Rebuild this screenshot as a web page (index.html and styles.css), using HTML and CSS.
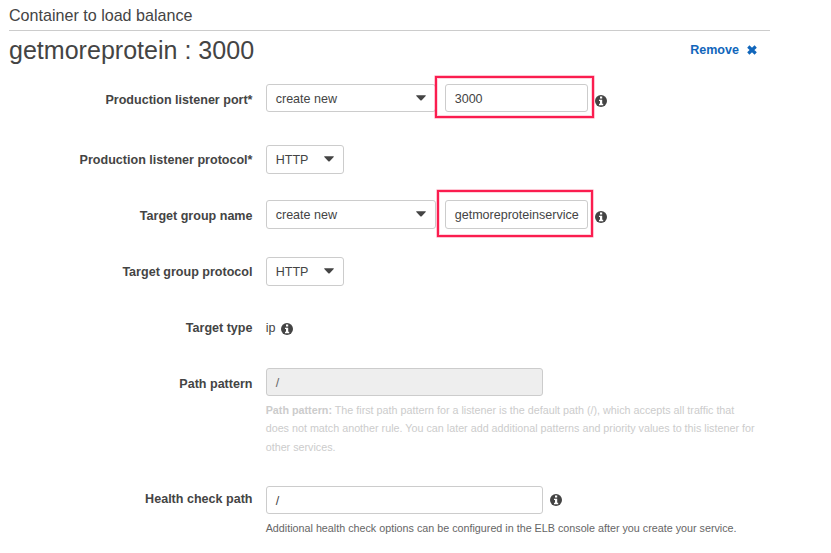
FILE: index.html
```html
<!DOCTYPE html>
<html lang="en">
<head>
<meta charset="utf-8">
<title>Container to load balance</title>
<link rel="stylesheet" href="styles.css">
</head>
<body>
<svg width="0" height="0" class="defs">
  <symbol id="info" viewBox="0 0 12 12"><circle cx="6" cy="6" r="6" fill="#444"/><path fill="#fff" d="M5 1.600h2.200v1.900H5zM4 4.700h3.200v4h1V10.200H4V8.700h1V6H4z"/></symbol>
  <symbol id="caret" viewBox="0 0 10 6"><path fill="#444" d="M.6 .2h8.800q.7.1.3.8L5.700 5.200q-.7.6-1.400 0L.3 1Q-.1.3.6.2z"/></symbol>
</svg>
<main class="panel">
  <h2 class="section-title">Container to load balance</h2>
  <header class="container-head">
    <h1>getmoreprotein : 3000</h1>
    <a class="remove">Remove <svg width="10" height="10" viewBox="0 0 10 10"><path d="M1.300 1.500l7.400 7M8.700 1.500l-7.400 7" stroke="#1166bb" stroke-width="3.200"/></svg></a>
  </header>
  <div class="row port">
    <label>Production listener port*</label>
    <div class="fields">
      <div class="box select wide">create new<svg class="caret"><use href="#caret"/></svg></div>
      <div class="marked"><div class="box input">3000</div><span class="mark"></span></div>
      <svg class="info"><use href="#info"/></svg>
    </div>
  </div>
  <div class="row protocol">
    <label>Production listener protocol*</label>
    <div class="fields"><div class="box select tall">HTTP<svg class="caret"><use href="#caret"/></svg></div></div>
  </div>
  <div class="row group">
    <label>Target group name</label>
    <div class="fields">
      <div class="box select wide tall">create new<svg class="caret"><use href="#caret"/></svg></div>
      <div class="marked"><div class="box input tall">getmoreproteinservice</div><span class="mark"></span></div>
      <svg class="info"><use href="#info"/></svg>
    </div>
  </div>
  <div class="row group-protocol">
    <label>Target group protocol</label>
    <div class="fields"><div class="box select tall">HTTP<svg class="caret"><use href="#caret"/></svg></div></div>
  </div>
  <div class="row type">
    <label>Target type</label>
    <div class="fields"><span class="value">ip</span><svg class="info"><use href="#info"/></svg></div>
  </div>
  <div class="row path">
    <label>Path pattern</label>
    <div>
      <div class="box long disabled">/</div>
      <p class="hint muted"><b>Path pattern:</b> The first path pattern for a listener is the default path (/), which accepts all traffic that<br>does not match another rule. You can later add additional patterns and priority values to this listener for<br>other services.</p>
    </div>
  </div>
  <div class="row health">
    <label>Health check path</label>
    <div>
      <div class="fields"><div class="box long">/</div><svg class="info"><use href="#info"/></svg></div>
      <p class="hint">Additional health check options can be configured in the ELB console after you create your service.</p>
    </div>
  </div>
</main>
</body>
</html>
```
FILE: styles.css
```css
* { box-sizing: border-box; }
body {
  margin: 0;
  background: #fff;
  color: #444;
  font: 12.550px/28px "Liberation Sans", Arial, sans-serif;
  height: 553px;
  overflow: hidden;
}
.defs { position: absolute; }
.panel { width: 761px; margin-left: 9px; }
h1, h2, p { margin: 0; font-weight: normal; }
.section-title {
  height: 31px;
  border-bottom: 1px solid #ccc;
  font-size: 16.100px;
  line-height: 31px;
}
.container-head { display: flex; justify-content: space-between; height: 53px; padding-right: 13px; }
h1 { font-size: 25.050px; line-height: 38px; }
.remove { display: flex; align-items: center; gap: 8px; height: 38px; font-weight: bold; color: #1166bb; }
.row { display: grid; grid-template-columns: 243.500px 1fr; column-gap: 13.200px; white-space: nowrap; }
.row > label { text-align: right; font-weight: bold; padding-top: 2px; }
.port { height: 61px; }
.protocol { height: 55px; }
.protocol > label { padding-top: 1px; }
.group { height: 57px; }
.group-protocol { height: 56px; }
.group-protocol > label { padding-top: 1px; }
.type { height: 55px; }
.type > label { padding-top: 1px; }
.type .fields { padding-top: 1px; }
.path { height: 118px; }
.health > label { padding-top: 0; margin-top: -1px; }
.fields { display: flex; align-items: flex-start; }
.box {
  height: 28px;
  border: 1px solid #ccc;
  border-radius: 3px;
  padding: 0 9px;
  line-height: 28px;
  background: #fff;
}
.tall { height: 29px; }
.select { display: flex; justify-content: space-between; width: 78px; }
.wide { width: 170px; padding-right: 8.500px; }
.caret { width: 10px; height: 6px; margin-top: 10.300px; }
.input { width: 143px; }
.marked { position: relative; margin-left: 9px; }
.mark { position: absolute; inset: -8px -6px -6px -10px; border: 2px solid #fb1d4f; box-shadow: 0 0 0 .5px #fb1d4f80, inset 0 0 0 1px #fb1d4f30; }
.group .mark { inset: -10px -5px -8px -8px; }
.info { width: 12px; height: 12px; margin: 11px 0 0 7px; }
.type .info { margin: 9px 0 0 5.500px; }
.health .info { margin-top: 8px; }
.long { width: 277px; }
.disabled { background: #eee; color: #666; }
.hint { font-size: 10.760px; line-height: 18.500px; margin-top: 5px; color: #666; }
.muted { color: #ccc; line-height: 18.400px; }
```
